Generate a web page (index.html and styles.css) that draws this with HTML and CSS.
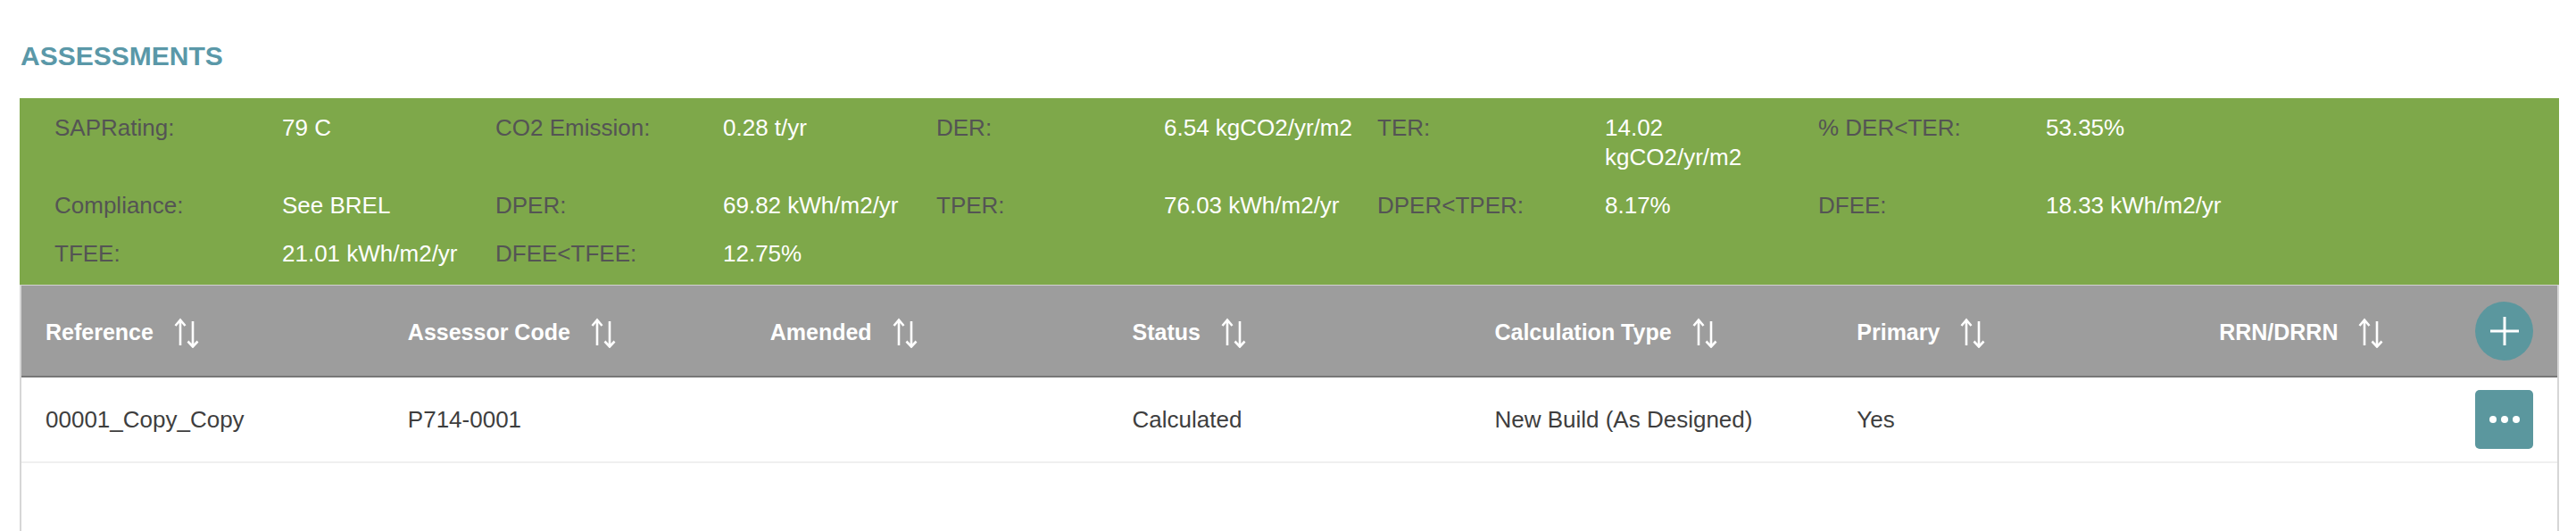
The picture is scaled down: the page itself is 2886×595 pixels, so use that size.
FILE: index.html
```html
<!DOCTYPE html>
<html lang="en">
<head>
<meta charset="utf-8">
<title>Assessments</title>
<link rel="stylesheet" href="styles.css">
</head>
<body>
<div class="page">
  <h2 class="title">ASSESSMENTS</h2>

  <div class="summary">
    <div class="lbl">SAPRating:</div><div class="val">79 C</div>
    <div class="lbl">CO2 Emission:</div><div class="val">0.28 t/yr</div>
    <div class="lbl">DER:</div><div class="val">6.54 kgCO2/yr/m2</div>
    <div class="lbl">TER:</div><div class="val">14.02 kgCO2/yr/m2</div>
    <div class="lbl">% DER&lt;TER:</div><div class="val">53.35%</div>

    <div class="lbl">Compliance:</div><div class="val">See BREL</div>
    <div class="lbl">DPER:</div><div class="val">69.82 kWh/m2/yr</div>
    <div class="lbl">TPER:</div><div class="val">76.03 kWh/m2/yr</div>
    <div class="lbl">DPER&lt;TPER:</div><div class="val">8.17%</div>
    <div class="lbl">DFEE:</div><div class="val">18.33 kWh/m2/yr</div>

    <div class="lbl">TFEE:</div><div class="val">21.01 kWh/m2/yr</div>
    <div class="lbl">DFEE&lt;TFEE:</div><div class="val">12.75%</div>
  </div>

  <div class="table">
    <div class="thead">
      <div class="th"><span class="th-label">Reference</span><svg class="sort" viewBox="0 0 32 34" width="32" height="34"><path d="M8 31V3M2.5 9L8 2.5L13.5 9M22 4V32M16.5 26.5L22 32.5L27.5 26.5"/></svg></div>
      <div class="th"><span class="th-label">Assessor Code</span><svg class="sort" viewBox="0 0 32 34" width="32" height="34"><path d="M8 31V3M2.5 9L8 2.5L13.5 9M22 4V32M16.5 26.5L22 32.5L27.5 26.5"/></svg></div>
      <div class="th"><span class="th-label">Amended</span><svg class="sort" viewBox="0 0 32 34" width="32" height="34"><path d="M8 31V3M2.5 9L8 2.5L13.5 9M22 4V32M16.5 26.5L22 32.5L27.5 26.5"/></svg></div>
      <div class="th"><span class="th-label">Status</span><svg class="sort" viewBox="0 0 32 34" width="32" height="34"><path d="M8 31V3M2.5 9L8 2.5L13.5 9M22 4V32M16.5 26.5L22 32.5L27.5 26.5"/></svg></div>
      <div class="th"><span class="th-label">Calculation Type</span><svg class="sort" viewBox="0 0 32 34" width="32" height="34"><path d="M8 31V3M2.5 9L8 2.5L13.5 9M22 4V32M16.5 26.5L22 32.5L27.5 26.5"/></svg></div>
      <div class="th"><span class="th-label">Primary</span><svg class="sort" viewBox="0 0 32 34" width="32" height="34"><path d="M8 31V3M2.5 9L8 2.5L13.5 9M22 4V32M16.5 26.5L22 32.5L27.5 26.5"/></svg></div>
      <div class="th th-last">
        <div class="th-group"><span class="th-label">RRN/DRRN</span><svg class="sort" viewBox="0 0 32 34" width="32" height="34"><path d="M8 31V3M2.5 9L8 2.5L13.5 9M22 4V32M16.5 26.5L22 32.5L27.5 26.5"/></svg></div>
        <button class="add-btn" type="button" aria-label="Add"><svg viewBox="0 0 34 34" width="34" height="34"><path d="M17 1V33M1 17H33"/></svg></button>
      </div>
    </div>
    <div class="tr">
      <div class="td">00001_Copy_Copy</div>
      <div class="td">P714-0001</div>
      <div class="td"></div>
      <div class="td">Calculated</div>
      <div class="td">New Build (As Designed)</div>
      <div class="td">Yes</div>
      <div class="td td-last"><button class="more-btn" type="button" aria-label="More"><span class="dot"></span><span class="dot"></span><span class="dot"></span></button></div>
    </div>
    <div class="tbody-empty"></div>
  </div>
</div>
</body>
</html>
```

FILE: styles.css
```css
html, body {
  margin: 0;
  padding: 0;
  background: #ffffff;
}

body {
  font-family: "Liberation Sans", Arial, sans-serif;
  color: #444444;
}

.page {
  padding: 46px 19px 0 22px;
}

.title {
  margin: 0 0 30px 1px;
  font-size: 30px;
  line-height: 34px;
  font-weight: bold;
  color: #5a98a8;
}

.summary {
  background: #7ea84a;
  padding: 17px 0 18px 39px;
  display: grid;
  grid-template-columns: repeat(5, 255px 239px);
  row-gap: 21px;
  font-size: 26px;
  line-height: 33px;
}

.summary .lbl {
  color: #545454;
  padding-right: 12px;
}

.summary .val {
  color: #ffffff;
  padding-right: 16px;
}

.table {
  border-top: 1px solid #d2d2d2;
  border-left: 2px solid #d6d6d6;
  border-right: 2px solid #d6d6d6;
}

.thead {
  display: grid;
  grid-template-columns: repeat(7, 1fr);
  height: 101px;
  background: #9d9d9d;
  border-bottom: 2px solid #777777;
}

.th {
  display: flex;
  align-items: center;
  gap: 22px;
  padding: 0 27px;
  color: #ffffff;
  font-size: 25px;
  font-weight: bold;
}

.th-label {
  padding-top: 4px;
}

.th-group {
  display: flex;
  align-items: center;
  gap: 22px;
}

.th-last {
  justify-content: space-between;
}

.sort {
  flex: none;
  margin-top: 4px;
}

.sort path {
  fill: none;
  stroke: #ffffff;
  stroke-width: 2.6;
}

.add-btn {
  flex: none;
  width: 65px;
  height: 66px;
  border: 0;
  padding: 0;
  border-radius: 50%;
  background: #5b979e;
  display: flex;
  align-items: center;
  justify-content: center;
}

.add-btn path {
  stroke: #ffffff;
  stroke-width: 3;
}

.tr {
  display: grid;
  grid-template-columns: repeat(7, 1fr);
  height: 94px;
  border-bottom: 2px solid #efefef;
}

.td {
  display: flex;
  align-items: center;
  padding: 0 27px;
  font-size: 26px;
  color: #3e3e3e;
}

.td-last {
  justify-content: flex-end;
}

.more-btn {
  width: 65px;
  height: 66px;
  border: 0;
  padding: 0;
  border-radius: 5px;
  background: #5b979e;
  display: flex;
  align-items: center;
  justify-content: center;
  gap: 5px;
}

.dot {
  width: 8px;
  height: 8px;
  border-radius: 50%;
  background: #ffffff;
}

.tbody-empty {
  height: 76px;
}
```
